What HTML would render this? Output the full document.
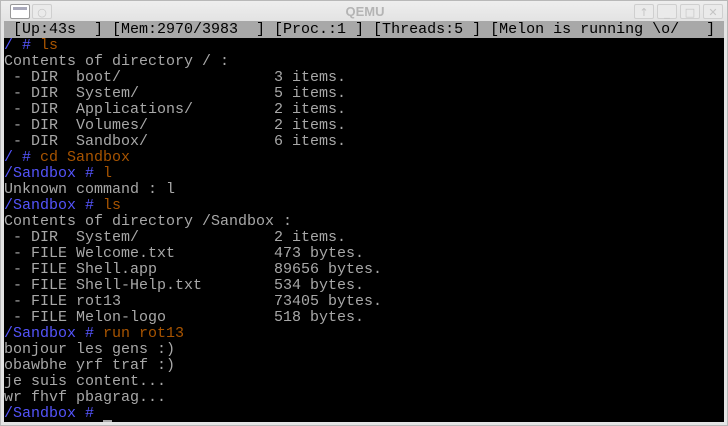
<!DOCTYPE html>
<html><head><meta charset="utf-8"><style>
html,body{margin:0;padding:0;width:728px;height:426px;overflow:hidden;background:#e4e4e4;}
.win{position:absolute;left:0;top:0;width:726px;height:424px;border:1px solid #b8b8b8;background:linear-gradient(#eeeeee,#e2e2e2 22px,#e4e4e4 22px);}
.title{position:absolute;left:0;top:0;width:728px;height:21px;text-align:center;font:bold 13px/21px "Liberation Sans",sans-serif;color:#b4b4b4;}
.btn{position:absolute;top:3px;width:20px;height:15px;border:1px solid #cfcfcf;border-radius:2px;background:#eaeaea;color:#c4c4c4;font:11px/15px "DejaVu Sans",sans-serif;text-align:center;box-sizing:border-box;}
.term{position:absolute;left:4px;top:22px;width:720px;height:400px;background:#000;}
pre{margin:0;font-family:"Liberation Mono","DejaVu Sans Mono",monospace;font-size:15px;line-height:16px;color:#a8a8a8;white-space:pre;}
.st{background:#a8a8a8;color:#000;}
.b{color:#5454fc}.o{color:#a85400}
.cur{position:absolute;left:103px;top:420px;width:9px;height:2px;background:#a8a8a8;}
</style></head><body>
<div class="win">
<div class="title">QEMU</div>
<div class="btn" style="left:9px;background:#fff;border-color:#999;"><div style="margin:2px 2px;height:3px;background:#aab;"></div></div>
<div class="btn" style="left:31px">○</div>
<div class="btn" style="left:633px">↑</div>
<div class="btn" style="left:656px">_</div>
<div class="btn" style="left:679px">□</div>
<div class="btn" style="left:702px">✕</div>
</div>
<div class="term"><pre><span class="st"> [Up:43s  ] [Mem:2970/3983  ] [Proc.:1 ] [Threads:5 ] [Melon is running \o/   ] </span>
<span class="b">/ # </span><span class="o">ls</span>
Contents of directory / :
 - DIR  boot/                 3 items.
 - DIR  System/               5 items.
 - DIR  Applications/         2 items.
 - DIR  Volumes/              2 items.
 - DIR  Sandbox/              6 items.
<span class="b">/ # </span><span class="o">cd Sandbox</span>
<span class="b">/Sandbox # </span><span class="o">l</span>
Unknown command : l
<span class="b">/Sandbox # </span><span class="o">ls</span>
Contents of directory /Sandbox :
 - DIR  System/               2 items.
 - FILE Welcome.txt           473 bytes.
 - FILE Shell.app             89656 bytes.
 - FILE Shell-Help.txt        534 bytes.
 - FILE rot13                 73405 bytes.
 - FILE Melon-logo            518 bytes.
<span class="b">/Sandbox # </span><span class="o">run rot13</span>
bonjour les gens :)
obawbhe yrf traf :)
je suis content...
wr fhvf pbagrag...
<span class="b">/Sandbox # </span></pre></div>
<div class="cur"></div>
</body></html>
